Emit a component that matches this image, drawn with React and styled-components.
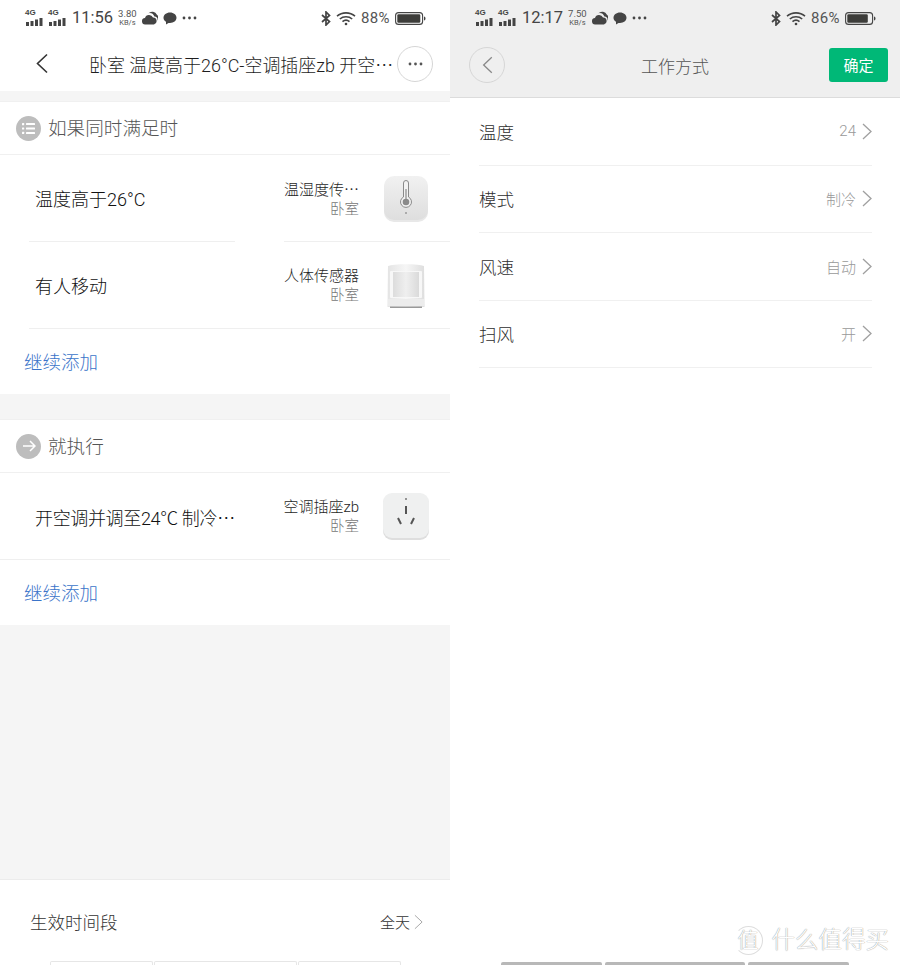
import React from "react";
import styled, { createGlobalStyle } from "styled-components";

const Global = createGlobalStyle`
  html, body { margin: 0; padding: 0; background: #fff; }
  body { font-family: Roboto, "Noto Sans CJK SC", sans-serif; font-weight: 300; }
  * { box-sizing: border-box; }
`;

const Page = styled.div`
  width: 900px; height: 965px; display: flex; overflow: hidden; background: #fff;
`;
const Panel = styled.div`
  width: 450px; height: 965px; display: flex; flex-direction: column; overflow: hidden;
  background: ${p => p.$bg || "#fff"};
`;
const StatusBar = styled.div`
  height: 36px; flex: none; display: flex; align-items: center; justify-content: space-between;
  padding: 0 24px 0 25px; color: #4a4a4a;
`;
const StatusSide = styled.div`
  display: flex; align-items: center; gap: ${p => p.$gap || 5}px;
`;
const Clock = styled.span`
  font-size: 16.500px; font-weight: 400; color: #444; line-height: 20px;
`;
const Speed = styled.span`
  display: flex; flex-direction: column; align-items: center; font-size: 9.500px; line-height: 10px; color: #555; font-weight: 400;
  small { font-size: 7.500px; line-height: 8px; }
`;
const Percent = styled.span`
  font-size: 15px; font-weight: 400; color: #555; letter-spacing: 0.400px;
`;
const Signal = styled.div`
  position: relative; width: 19px; height: 16px; margin-top: -1px;
  span { position: absolute; left: 0; top: -1px; font: 700 8px/8px "Liberation Sans", sans-serif; color: #444; }
  svg { position: absolute; left: 0; bottom: 0; }
`;
const Signals = styled.div`
  display: flex; gap: 4px;
`;
const Dots = styled.span`
  font-family: "Noto Sans CJK SC", sans-serif;
`;

const SignalIcon = () => (
  <Signal>
    <span>4G</span>
    <svg width="19" height="8" viewBox="0 0 19 8" fill="#444">
      <rect x="1" y="4" width="3" height="4" /><rect x="5.500" y="3" width="3" height="5" />
      <rect x="10" y="1.500" width="3" height="6.500" /><rect x="14.500" y="0" width="3" height="8" />
    </svg>
  </Signal>
);
const CloudIcon = () => (
  <svg width="16" height="14" viewBox="0 0 15 13" fill="#444">
    <path d="M6 2a5 5 0 0 1 8 1.500a4 4 0 0 1 .6 5.500a3.500 3.500 0 0 0-3-4A5 5 0 0 0 6 2z" />
    <path d="M3.200 12.500a3 3 0 0 1-.4-6 4 4 0 0 1 7.500-.5a3.300 3.300 0 0 1 .9 6.500z" />
  </svg>
);
const BubbleIcon = () => (
  <svg width="14" height="13" viewBox="0 0 14 13" fill="#444">
    <path d="M7 .5c3.700 0 6.500 2.400 6.500 5.300S10.700 11 7 11c-.5 0-1 0-1.500-.1L3 12.500V9.800C1.400 8.900.5 7.500.5 5.800.5 2.900 3.300.500 7 .5z" />
  </svg>
);
const MoreDots = ({ c = "#444" }) => (
  <svg width="15" height="4" viewBox="0 0 15 4" fill={c}>
    <circle cx="2" cy="2" r="1.400" /><circle cx="7.500" cy="2" r="1.400" /><circle cx="13" cy="2" r="1.400" />
  </svg>
);
const BluetoothIcon = () => (
  <svg width="10" height="15" viewBox="0 0 10 15" fill="none" stroke="#444" strokeWidth="1.700">
    <path d="M1 4l7.500 6.500L5 14V1l3.500 3.500L1 11" />
  </svg>
);
const WifiIcon = () => (
  <svg width="20" height="15" viewBox="0 0 20 15" fill="none" stroke="#444" strokeWidth="1.600">
    <path d="M1 5.200c5-4.400 13-4.400 18 0" /><path d="M3.800 8c3.500-3 8.900-3 12.400 0" />
    <path d="M6.500 10.600c2-1.700 5-1.700 7 0" />
    <circle cx="10" cy="13" r="1.300" fill="#444" stroke="none" />
  </svg>
);
const BatteryIcon = ({ fill }) => (
  <svg width="31" height="13" viewBox="0 0 31 13">
    <rect x=".6" y=".6" width="27" height="11.800" rx="3" fill="none" stroke="#444" strokeWidth="1.100" />
    <rect x="2.300" y="2.300" width={fill} height="8.400" rx="1.200" fill="#3d3d3a" />
    <path d="M29 4.500c1 .3 1.500 1 1.500 2s-.5 1.700-1.500 2z" fill="#444" />
  </svg>
);

const Status = ({ time, speed, pct, fill }) => (
  <StatusBar>
    <StatusSide>
      <Signals><SignalIcon /><SignalIcon /></Signals>
      <Clock>{time}</Clock>
      <Speed>{speed}<small>KB/s</small></Speed>
      <CloudIcon /><BubbleIcon /><MoreDots />
    </StatusSide>
    <StatusSide $gap={5}>
      <BluetoothIcon /><WifiIcon /><Percent>{pct}</Percent><BatteryIcon fill={fill} />
    </StatusSide>
  </StatusBar>
);

const Nav = styled.div`
  height: 55px; flex: none; display: flex; align-items: center; padding: 0 17px 0 36px;
`;
const Title = styled.div`
  font-size: 17.950px; line-height: 24px; color: #1e1e1e; margin: 2px 0 0 41px; width: 308px; white-space: nowrap; overflow: hidden;
`;
const RoundBtn = styled.div`
  width: 36px; height: 36px; border: 1px solid #d6d6d6; border-radius: 50%; flex: none;
  display: flex; align-items: center; justify-content: center;
`;
const Gap = styled.div`
  height: ${p => p.$h}px; flex: ${p => (p.$grow ? 1 : "none")}; background: #f5f5f5;
`;
const SectionHead = styled.div`
  height: 54px; flex: none; display: flex; align-items: center; gap: 7px; padding-left: 16px;
  border-top: 1px solid #f0f0f0; border-bottom: 1px solid #f0f0f0; background: #fff;
  font-size: 18.600px; color: #555; line-height: 24px;
`;
const HeadLabel = styled.span`
  position: relative; top: 1px;
`;
const HeadBadge = styled.div`
  width: 25px; height: 25px; border-radius: 50%; background: #bdbdbd; display: flex;
  align-items: center; justify-content: center;
`;
const Row = styled.div`
  height: ${p => p.$h || 87}px; flex: none; display: flex; align-items: center; padding: 0 21px 0 35px;
  position: relative; background: #fff;
  border-bottom: ${p => (p.$full ? "1px solid #efefef" : "none")};
`;
const CondText = styled.div`
  font-size: 18px; color: #111; flex: 1; white-space: nowrap; line-height: 24px; margin-top: 3px;
  letter-spacing: ${p => (p.$tight ? "-0.350px" : "0")};
`;
const Device = styled.div`
  display: flex; flex-direction: column; align-items: flex-end; margin-right: 24px; width: 90px;
`;
const DevName = styled.div`
  font-size: 15px; line-height: 20px; color: #1e1e1e; white-space: nowrap;
`;
const DevRoom = styled.div`
  font-size: 14.500px; line-height: 19px; color: #777;
`;
const Thumb = styled.div`
  width: 46px; height: 48px; flex: none; display: flex; align-items: center; justify-content: center;
`;
const PartLine = styled.div`
  position: absolute; bottom: 0; height: 1px; background: #efefef;
  left: ${p => p.$l}px; width: ${p => p.$w}px;
`;
const AddRow = styled.div`
  height: ${p => p.$h}px; flex: none; padding: 0 0 2px 24px; display: flex; align-items: center;
  font-size: 18.500px; color: #3b74c9; background: #fff;
`;
const Footer = styled.div`
  flex: none; height: 86px; background: #fff; border-top: 1px solid #ececec; display: flex; flex-direction: column;
`;
const FooterRow = styled.div`
  height: 81px; padding: 2px 27px 0 30px; display: flex; align-items: center; justify-content: space-between;
  font-size: 17.500px; color: #333;
`;
const FooterValue = styled.div`
  display: flex; align-items: center; gap: 4px; font-size: 15px; color: #333;
`;
const Tabs = styled.div`
  display: flex; gap: ${p => p.$gap}px; padding-left: ${p => p.$l}px; margin-top: auto;
`;
const Tab = styled.div`
  width: ${p => p.$w}px; height: ${p => p.$h}px; background: ${p => p.$bg || "transparent"};
  border: ${p => (p.$line ? "1px solid #e6e6e6" : "none")}; border-bottom: none; border-radius: 2px 2px 0 0;
`;

const Nav2 = styled.div`
  height: 62px; flex: none; display: flex; align-items: center; justify-content: space-between;
  padding: 0 12px 4px 19px; border-bottom: 1px solid #dcdcdc; position: relative;
`;
const Nav2Title = styled.div`
  position: absolute; left: 0; right: 0; text-align: center; font-size: 17px; line-height: 24px; color: #555; top: 19px;
`;
const Confirm = styled.div`
  width: 59px; height: 34px; background: #00b877; border-radius: 3px; color: #fff; font-size: 15px; font-weight: 400;
  display: flex; align-items: center; justify-content: center; position: relative;
`;
const List = styled.div`
  padding: 0 28px 0 29px; background: #fff; flex: 1; display: flex; flex-direction: column;
`;
const ListRow = styled.div`
  height: 67.500px; flex: none; display: flex; align-items: center; justify-content: space-between;
  border-bottom: 1px solid #f0f0f0; font-size: 17.500px; color: #2e2e2e;
`;
const ListValue = styled.div`
  display: flex; align-items: center; gap: 6px; font-size: 15px; color: #999;
`;
const Watermark = styled.div`
  position: absolute; right: 11px; bottom: 10px; display: flex; align-items: center; gap: 9px;
  color: #fff; text-shadow: 0 0 1px #9a9a9a, 0 0 1px #b0b0b0;
  font-size: 23.500px; line-height: 30px;
`;
const WmCircle = styled.div`
  width: 29px; height: 29px; border-radius: 50%; border: 1px solid #ddd; border-left-color: transparent;
  display: flex; align-items: center; justify-content: center; font-size: 21px;
`;
const RightWrap = styled.div`
  flex: 1; display: flex; flex-direction: column; position: relative; background: #fff;
`;

const Chevron = ({ w = 10, h = 17, c = "#a0a0a0", sw = 1.300 }) => (
  <svg width={w} height={h} viewBox="0 0 10 17" fill="none" stroke={c} strokeWidth={sw}>
    <path d="M1 1l8 7.500-8 7.500" />
  </svg>
);
const BackArrow = ({ c = "#333", w = 12, h = 21, sw = 1.600 }) => (
  <svg width={w} height={h} viewBox="0 0 12 21" fill="none" stroke={c} strokeWidth={sw}>
    <path d="M11 1.500L1.500 10.500 11 19.500" />
  </svg>
);
const ListGlyph = () => (
  <svg width="13" height="11" viewBox="0 0 13 11" fill="#fff">
    <rect x="0" y="0" width="2.200" height="2.200" rx=".5" /><rect x="0" y="4.400" width="2.200" height="2.200" rx=".5" />
    <rect x="0" y="8.800" width="2.200" height="2.200" rx=".5" />
    <rect x="4" y="0" width="9" height="2" rx=".5" /><rect x="4" y="4.500" width="9" height="2" rx=".5" />
    <rect x="4" y="8.900" width="9" height="2" rx=".5" />
  </svg>
);
const ArrowGlyph = () => (
  <svg width="14" height="12" viewBox="0 0 14 12" fill="none" stroke="#fff" strokeWidth="1.500">
    <path d="M1 6h12M8 1l5 5-5 5" />
  </svg>
);
const ThermoTile = () => (
  <svg width="46" height="48" viewBox="0 0 46 48">
    <defs>
      <linearGradient id="tile" x1="0" y1="0" x2="0" y2="1">
        <stop offset="0" stopColor="#f1f1f1" /><stop offset="1" stopColor="#dedede" />
      </linearGradient>
    </defs>
    <rect x="1" y="3" width="44" height="44" rx="10" fill="#e8e8e8" />
    <rect x="1" y="1" width="44" height="44" rx="10" fill="url(#tile)" />
    <path d="M20.500 8a2.500 2.500 0 0 1 5 0v14a5.500 5.500 0 1 1-5 0z" fill="#f2f2f2" stroke="#8a8a8a" strokeWidth="1" />
    <circle cx="23" cy="27" r="3.300" fill="#8a8a8a" />
    <rect x="22.400" y="14" width="1.200" height="12" fill="#8a8a8a" />
    <circle cx="23" cy="38" r=".8" fill="#666" />
  </svg>
);
const MotionSensor = () => (
  <svg width="38" height="46" viewBox="0 0 38 46">
    <defs>
      <linearGradient id="ms" x1="0" y1="0" x2="1" y2="0">
        <stop offset="0" stopColor="#e4e4e4" /><stop offset=".5" stopColor="#f6f6f6" /><stop offset="1" stopColor="#dedede" />
      </linearGradient>
      <linearGradient id="msp" x1="0" y1="0" x2="1" y2="0">
        <stop offset="0" stopColor="#dcdcdc" /><stop offset=".5" stopColor="#efefef" /><stop offset="1" stopColor="#dadada" />
      </linearGradient>
    </defs>
    <path d="M1 3c5-2.500 31-2.500 36 0l.5 41H.5z" fill="url(#ms)" />
    <rect x="3" y="8" width="32" height="27" rx="1" fill="#f7f7f7" />
    <rect x="6" y="9" width="26" height="25" fill="url(#msp)" />
    <rect x="1" y="36" width="36" height="7" fill="#ececec" />
    <rect x="3" y="43.500" width="32" height="1.500" fill="#999" />
  </svg>
);
const PlugTile = () => (
  <svg width="46" height="48" viewBox="0 0 46 48">
    <rect x="0" y="3" width="46" height="45" rx="9" fill="#dedede" />
    <rect x="0" y="1" width="46" height="45" rx="9" fill="#eff0f0" />
    <circle cx="23" cy="7" r="1" fill="#777" />
    <rect x="22" y="14" width="2" height="8" fill="#555" />
    <path d="M15 26l3 6M31 26l-3 6" stroke="#555" strokeWidth="2" fill="none" />
  </svg>
);

const left = (
  <Panel>
    <Status time="11:56" speed="3.80" pct="88%" fill={23} />
    <Nav>
      <BackArrow />
      <Title>卧室 温度高于26°C-空调插座zb 开空<Dots>…</Dots></Title>
      <RoundBtn><MoreDots c="#555" /></RoundBtn>
    </Nav>
    <Gap $h={10} />
    <SectionHead><HeadBadge><ListGlyph /></HeadBadge><HeadLabel>如果同时满足时</HeadLabel></SectionHead>
    <Row>
      <CondText>温度高于26°C</CondText>
      <Device><DevName>温湿度传<Dots>…</Dots></DevName><DevRoom>卧室</DevRoom></Device>
      <Thumb><ThermoTile /></Thumb>
      <PartLine $l={29} $w={206} /><PartLine $l={284} $w={166} />
    </Row>
    <Row $h={87}>
      <CondText>有人移动</CondText>
      <Device><DevName>人体传感器</DevName><DevRoom>卧室</DevRoom></Device>
      <Thumb><MotionSensor /></Thumb>
      <PartLine $l={29} $w={421} />
    </Row>
    <AddRow $h={65}>继续添加</AddRow>
    <Gap $h={25} />
    <SectionHead><HeadBadge><ArrowGlyph /></HeadBadge><HeadLabel>就执行</HeadLabel></SectionHead>
    <Row $full>
      <CondText $tight>开空调并调至24℃ 制冷<Dots>…</Dots></CondText>
      <Device><DevName>空调插座zb</DevName><DevRoom>卧室</DevRoom></Device>
      <Thumb><PlugTile /></Thumb>
    </Row>
    <AddRow $h={65}>继续添加</AddRow>
    <Gap $grow />
    <Footer>
      <FooterRow>
        生效时间段
        <FooterValue>全天<Chevron h={16} w={9} c="#a8a8a8" sw={1.100} /></FooterValue>
      </FooterRow>
      <Tabs $gap={1} $l={50}>
        <Tab $w={103} $h={4} $line /><Tab $w={143} $h={4} $line /><Tab $w={103} $h={4} $line />
      </Tabs>
    </Footer>
  </Panel>
);

const right = (
  <Panel $bg="#efefef">
    <Status time="12:17" speed="7.50" pct="86%" fill={20.500} />
    <Nav2>
      <RoundBtn><BackArrow c="#888" w={11} h={18} sw={1.500} /></RoundBtn>
      <Nav2Title>工作方式</Nav2Title>
      <Confirm>确定</Confirm>
    </Nav2>
    <RightWrap>
      <List>
        {[["温度", "24"], ["模式", "制冷"], ["风速", "自动"], ["扫风", "开"]].map(([k, v]) => (
          <ListRow key={k}>
            {k}
            <ListValue>{v}<Chevron /></ListValue>
          </ListRow>
        ))}
        <Tabs $gap={3} $l={22}>
          <Tab $w={101} $h={3} $bg="#b8b8b8" /><Tab $w={140} $h={3} $bg="#b8b8b8" /><Tab $w={101} $h={3} $bg="#b8b8b8" />
        </Tabs>
      </List>
      <Watermark><WmCircle>值</WmCircle>什么值得买</Watermark>
    </RightWrap>
  </Panel>
);

export default function App() {
  return (
    <>
      <Global />
      <Page>{left}{right}</Page>
    </>
  );
}
